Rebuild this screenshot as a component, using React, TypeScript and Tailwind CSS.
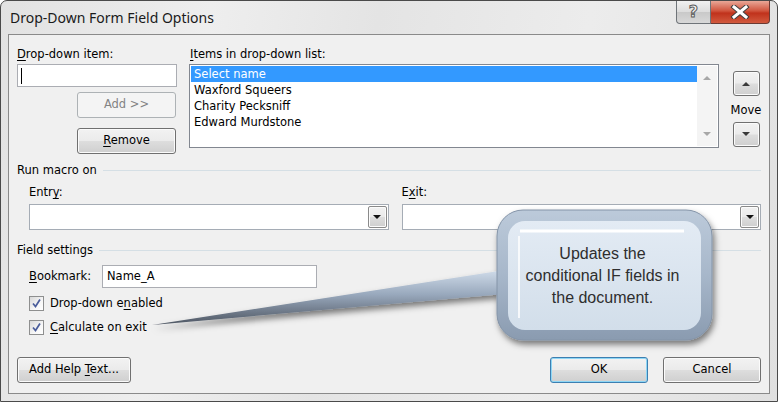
import type { ReactNode } from "react";
import clsx from "clsx";

const btnFace =
  "bg-[linear-gradient(#f2f2f2,#ebebeb_48%,#dddddd_52%,#cfcfcf)] shadow-[inset_0_0_0_1px_#fbfbfb]";

function Key({ children }: { children: ReactNode }) {
  return <span className="underline decoration-1 underline-offset-[2px]">{children}</span>;
}

function Tri({ up, color = "#2b2b2b" }: { up?: boolean; color?: string }) {
  return (
    <svg width="8" height="5" viewBox="0 0 8 5">
      <path d={up ? "M0 5 L4 1 L8 5 Z" : "M0 0 L8 0 L4 4 Z"} fill={color} />
    </svg>
  );
}

function Button({
  children,
  className,
  disabled,
  isDefault,
}: {
  children: ReactNode;
  className?: string;
  disabled?: boolean;
  isDefault?: boolean;
}) {
  return (
    <button
      type="button"
      className={clsx(
        "flex h-[26px] items-center justify-center rounded-[3px] border",
        disabled && "border-[#adb2b5] bg-[#f4f4f4] text-[#838383]",
        !disabled && !isDefault && ["border-[#707070] text-black", btnFace],
        isDefault &&
          "border-[#3c7fb1] bg-[linear-gradient(#f2f2f2,#ebebeb_48%,#dddddd_52%,#cfcfcf)] text-black shadow-[inset_0_0_0_1px_#8ed6f5]",
        className,
      )}
    >
      <span>{children}</span>
    </button>
  );
}

function Combo() {
  return (
    <div className="flex h-[26px] border border-[#a5acb5] bg-white p-[1px]">
      <div className="flex-1" />
      <div
        className={clsx(
          "flex w-[19px] items-center justify-center rounded-[2px] border border-[#8a8a8a]",
          btnFace,
        )}
      >
        <Tri color="#111" />
      </div>
    </div>
  );
}

function GroupTitle({ title }: { title: string }) {
  return (
    <div className="flex h-[13px] items-center">
      <span className="leading-[13px]">{title}</span>
      <div className="ml-[6px] h-px flex-1 bg-[#d5dfe5]" />
    </div>
  );
}

function CheckRow({ children }: { children: ReactNode }) {
  return (
    <div className="flex h-[16px] items-center">
      <div className="flex h-[15px] w-[15px] items-center justify-center border border-[#8e8f8f] bg-[linear-gradient(135deg,#d8d8d8,#f7f7f7_60%,#ffffff)]">
        <svg width="11" height="11" viewBox="0 0 11 11">
          <path d="M2 5.5 L4.5 8.5 L9 1.5" stroke="#4a5d9b" strokeWidth="1.7" fill="none" />
        </svg>
      </div>
      <span className="ml-[6px] leading-[13px]">{children}</span>
    </div>
  );
}

function TitleBar() {
  return (
    <div className="flex h-[33px] items-start">
      <div className="mt-[7px] pl-[2px] font-['Noto_Sans',sans-serif] text-[14px] leading-[19px] text-[#1a1a1a]">
        Drop-Down Form Field Options
      </div>
      <div className="ml-auto flex h-[23px]">
        <div className="flex w-[35px] items-center justify-center rounded-bl-[4px] border border-t-0 border-[#6f7479] bg-[linear-gradient(#f1f1f1,#dcdcdc_50%,#c9c9c9_52%,#d8d8d8)]">
          <span className="font-['DejaVu_Sans',sans-serif] text-[16px] font-bold leading-none text-[#f4f4f4] [-webkit-text-stroke:1px_#5c5c5c]">
            ?
          </span>
        </div>
        <div className="flex w-[59px] items-center justify-center rounded-br-[4px] border border-l-0 border-t-0 border-[#6b3a33] bg-[linear-gradient(#e9a797,#d0543d_45%,#c0321c_55%,#d25a3e)]">
          <svg width="20" height="14" viewBox="0 0 20 14">
            <path d="M4 2 L16 12 M16 2 L4 12" stroke="#3f3f3f" strokeWidth="5" strokeLinecap="square" />
            <path d="M4 2 L16 12 M16 2 L4 12" stroke="#ffffff" strokeWidth="3" strokeLinecap="square" />
          </svg>
        </div>
      </div>
    </div>
  );
}

function Callout() {
  return (
    <>
      <svg className="pointer-events-none absolute left-0 top-0" width="778" height="402">
        <defs>
          <linearGradient id="tail" x1="0" y1="0" x2="0" y2="1">
            <stop offset="0" stopColor="#d0dcea" />
            <stop offset="0.45" stopColor="#98a8bc" />
            <stop offset="1" stopColor="#4d5561" />
          </linearGradient>
          <linearGradient id="rim" x1="0" y1="0" x2="0" y2="1">
            <stop offset="0" stopColor="#bccada" />
            <stop offset="0.5" stopColor="#a7b7ca" />
            <stop offset="1" stopColor="#8a9bb0" />
          </linearGradient>
          <linearGradient id="body" x1="0" y1="0" x2="0" y2="1">
            <stop offset="0" stopColor="#e3ebf4" />
            <stop offset="1" stopColor="#d2deea" />
          </linearGradient>
          <filter id="sh" x="-20%" y="-20%" width="140%" height="150%">
            <feDropShadow dx="2" dy="4" stdDeviation="3" floodColor="#000" floodOpacity="0.5" />
          </filter>
        </defs>
        <g filter="url(#sh)">
          <path d="M152 325 L505 270 L505 294 Z" fill="url(#tail)" />
          <rect x="497" y="210" width="215" height="130" rx="26" fill="url(#rim)" stroke="#8494a8" />
        </g>
        <rect x="508" y="221" width="193" height="109" rx="17" fill="url(#body)" />
        <path d="M520 231 H684" stroke="#ffffff" strokeWidth="3" />
        <path d="M519 236 V318" stroke="#ffffff" strokeWidth="2" opacity="0.8" />
      </svg>
      <div className="pointer-events-none absolute left-[497px] top-[210px] flex h-[130px] w-[215px] items-center justify-center pr-[4px] pt-[1px] text-center font-['Liberation_Sans',Arial,sans-serif] text-[16px] leading-[22px] text-[#2e2e2e]">
        <div>
          Updates the
          <br />
          conditional IF fields in
          <br />
          the document.
        </div>
      </div>
    </>
  );
}

export default function App() {
  const items = ["Select name", "Waxford Squeers", "Charity Pecksniff", "Edward Murdstone"];

  return (
    <div className="relative h-[402px] w-[778px] overflow-hidden bg-white">
      <div className="flex h-full w-full flex-col rounded-t-[7px] border border-[#4a4a4a] bg-[linear-gradient(100deg,#e2e2e2,#eeeeee_25%,#e4e4e4_45%,#ececec_70%,#e0e0e0)] px-[7px] pb-[7px]">
        <TitleBar />
        <div className="flex flex-1 flex-col border border-[#8a8a8a] bg-[#f0f0f0] px-[8px] pt-[13px] font-['DejaVu_Sans',sans-serif] text-[11.5px] text-black">
          {/* top row */}
          <div className="flex">
            <div className="flex w-[160px] flex-col">
              <div className="h-[13px] leading-[13px]">
                <Key>D</Key>rop-down item:
              </div>
              <div className="mt-[3px] flex h-[23px] items-center border border-[#abadb3] bg-white pl-[3px]">
                <div className="h-[16px] w-px bg-black" />
              </div>
              <Button disabled className="ml-[60px] mt-[5px] w-[99px]">
                Add &gt;&gt;
              </Button>
              <Button className="ml-[60px] mt-[10px] w-[99px]">
                <Key>R</Key>emove
              </Button>
            </div>
            <div className="ml-[12px] flex w-[530px] flex-col">
              <div className="h-[13px] pl-[1px] leading-[13px]">
                <Key>I</Key>tems in drop-down list:
              </div>
              <div className="mt-[3px] flex h-[84px] border border-[#828790] bg-white p-[1px]">
                <div className="flex-1">
                  {items.map((item, i) => (
                    <div
                      key={item}
                      className={clsx(
                        "h-[16px] px-[3px] leading-[16px]",
                        i === 0 && "bg-[#3399ff] text-white",
                      )}
                    >
                      {item}
                    </div>
                  ))}
                </div>
                <div className="flex w-[20px] flex-col items-center justify-between bg-[#f4f4f4] py-[9px]">
                  <Tri up color="#a7a7a7" />
                  <Tri color="#a7a7a7" />
                </div>
              </div>
            </div>
            <div className="ml-[13px] flex w-[28px] flex-col items-center">
              <button
                type="button"
                className={clsx(
                  "mt-[23px] flex h-[25px] w-[27px] items-center justify-center rounded-[3px] border border-[#707070]",
                  btnFace,
                )}
              >
                <Tri up color="#3a3a3a" />
              </button>
              <div className="mt-[8px] h-[13px] leading-[13px]">Move</div>
              <button
                type="button"
                className={clsx(
                  "mt-[5px] flex h-[25px] w-[27px] items-center justify-center rounded-[3px] border border-[#707070]",
                  btnFace,
                )}
              >
                <Tri color="#3a3a3a" />
              </button>
            </div>
          </div>

          {/* run macro on */}
          <div className="mt-[10px]">
            <GroupTitle title="Run macro on" />
          </div>
          <div className="mt-[9px] flex gap-[13px] pl-[12px]">
            <div className="flex flex-1 flex-col">
              <div className="h-[13px] leading-[13px]">
                Entr<Key>y</Key>:
              </div>
              <div className="mt-[5px]">
                <Combo />
              </div>
            </div>
            <div className="flex flex-1 flex-col">
              <div className="h-[13px] leading-[13px]">
                E<Key>x</Key>it:
              </div>
              <div className="mt-[5px]">
                <Combo />
              </div>
            </div>
          </div>

          {/* field settings */}
          <div className="mt-[14px]">
            <GroupTitle title="Field settings" />
          </div>
          <div className="mt-[8px] flex flex-col pl-[12px]">
            <div className="flex h-[23px] items-center">
              <span className="w-[73px] leading-[13px]">
                <Key>B</Key>ookmark:
              </span>
              <div className="flex h-[23px] w-[215px] items-center border border-[#abadb3] bg-white px-[4px]">
                Name_A
              </div>
            </div>
            <div className="mt-[7px]">
              <CheckRow>
                Drop-down e<Key>n</Key>abled
              </CheckRow>
            </div>
            <div className="mt-[8px]">
              <CheckRow>
                <Key>C</Key>alculate on exit
              </CheckRow>
            </div>
          </div>

          {/* bottom buttons */}
          <div className="mt-auto flex pb-[10px]">
            <Button className="w-[114px]">
              Add Help <Key>T</Key>ext...
            </Button>
            <Button isDefault className="ml-auto w-[98px]">
              OK
            </Button>
            <Button className="ml-[15px] w-[98px]">Cancel</Button>
          </div>
        </div>
      </div>
      <Callout />
    </div>
  );
}
